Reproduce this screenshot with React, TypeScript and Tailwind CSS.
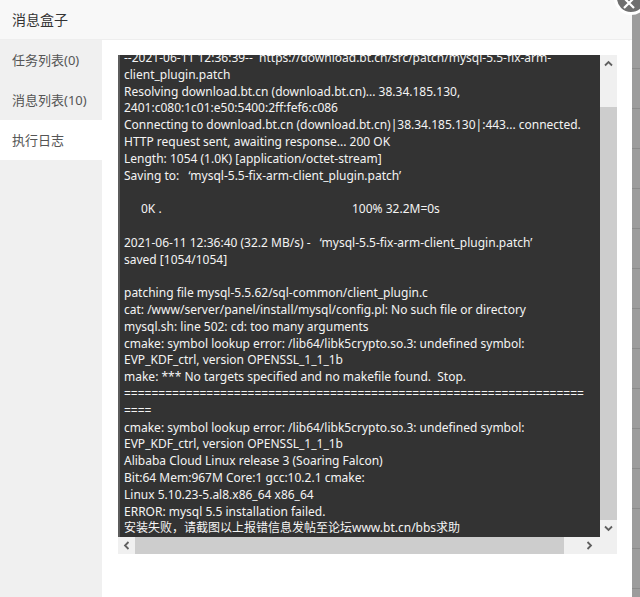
import React from "react";

const lines: React.ReactNode[] = [
  "--2021-06-11 12:36:39--  https://download.bt.cn/src/patch/mysql-5.5-fix-arm-",
  "client_plugin.patch",
  "Resolving download.bt.cn (download.bt.cn)... 38.34.185.130,",
  "2401:c080:1c01:e50:5400:2ff:fef6:c086",
  "Connecting to download.bt.cn (download.bt.cn)|38.34.185.130|:443... connected.",
  "HTTP request sent, awaiting response... 200 OK",
  "Length: 1054 (1.0K) [application/octet-stream]",
  "Saving to:   \u2018mysql-5.5-fix-arm-client_plugin.patch\u2019",
  "",
  <span>
    <span className="inline-block w-[228px] pl-[17px]">0K .</span>
    <span>100% 32.2M=0s</span>
  </span>,
  "",
  "2021-06-11 12:36:40 (32.2 MB/s) -   \u2018mysql-5.5-fix-arm-client_plugin.patch\u2019",
  "saved [1054/1054]",
  "",
  "patching file mysql-5.5.62/sql-common/client_plugin.c",
  "cat: /www/server/panel/install/mysql/config.pl: No such file or directory",
  "mysql.sh: line 502: cd: too many arguments",
  "cmake: symbol lookup error: /lib64/libk5crypto.so.3: undefined symbol:",
  "EVP_KDF_ctrl, version OPENSSL_1_1_1b",
  "make: *** No targets specified and no makefile found.  Stop.",
  "===================================================================",
  "====",
  "cmake: symbol lookup error: /lib64/libk5crypto.so.3: undefined symbol:",
  "EVP_KDF_ctrl, version OPENSSL_1_1_1b",
  "Alibaba Cloud Linux release 3 (Soaring Falcon)",
  "Bit:64 Mem:967M Core:1 gcc:10.2.1 cmake:",
  "Linux 5.10.23-5.al8.x86_64 x86_64",
  "ERROR: mysql 5.5 installation failed.",
  "安装失败，请截图以上报错信息发帖至论坛www.bt.cn/bbs求助",
];

function Chevron({ dir }: { dir: "up" | "down" | "left" | "right" }) {
  const rot = { up: 0, right: 90, down: 180, left: 270 }[dir];
  return (
    <svg width="9" height="9" viewBox="0 0 9 9" style={{ transform: `rotate(${rot}deg)` }}>
      <path d="M1 6.5 L4.5 3 L8 6.5" fill="none" stroke="#606060" strokeWidth="1.8" />
    </svg>
  );
}

export default function App() {
  return (
    <div
      className="relative flex w-[640px] h-[597px] overflow-hidden bg-[#9c9c9c]"
      style={{ fontFamily: '"Noto Sans", "Noto Sans CJK SC", sans-serif' }}
    >
      <div className="flex w-[632px] h-full flex-col bg-white">
        <div className="h-[40px] shrink-0 border-b border-[#eeeeee] bg-[#f8f8f8] pl-[12px] text-[14px] leading-[39px] text-[#333]">
          消息盒子
        </div>
        <div className="flex flex-1 min-h-0">
          <div className="w-[102px] shrink-0 bg-[#f0f0f0] text-[13px] text-[#555]">
            <div className="h-[40px] pl-[12px] leading-[40px]">任务列表(0)</div>
            <div className="h-[40px] pl-[12px] leading-[40px]">消息列表(10)</div>
            <div className="h-[40px] bg-white pl-[12px] leading-[40px]">执行日志</div>
          </div>
          <div className="flex-1 pl-[16px] pt-[15px]">
            <div className="grid w-[499px] h-[499px] grid-cols-[482px_17px] grid-rows-[482px_17px]">
              <div className="overflow-hidden border-l-[2px] border-[#5c5c5c] bg-[#333333] pl-[4px] text-[12px] leading-[16.8px] text-[#f4f4f4]">
                <div className="-mt-[5px] whitespace-pre">
                  {lines.map((l, i) => (
                    <div key={i} className="h-[16.8px]">
                      {l}
                    </div>
                  ))}
                </div>
              </div>
              <div className="flex flex-col bg-[#f0f0f0]">
                <div className="flex h-[17px] items-center justify-center">
                  <Chevron dir="up" />
                </div>
                <div className="h-[35px]" />
                <div className="flex-1 bg-[#cdcdcd]" />
                <div className="flex h-[17px] items-center justify-center">
                  <Chevron dir="down" />
                </div>
              </div>
              <div className="flex bg-[#f0f0f0]">
                <div className="flex w-[17px] items-center justify-center">
                  <Chevron dir="left" />
                </div>
                <div className="w-[429px] bg-[#cdcdcd]" />
                <div className="flex flex-1 items-center justify-end pr-[6px]">
                  <Chevron dir="right" />
                </div>
              </div>
              <div className="bg-[#f0f0f0]" />
            </div>
          </div>
        </div>
      </div>
      <div className="flex flex-1 flex-col pt-[68px]">
        {Array.from({ length: 14 }).map((_, i) => (
          <div key={i} className="h-[40px] shrink-0 border-t border-[#8a8a8a]" />
        ))}
      </div>
      <div className="absolute left-[614px] top-[-19px] flex h-[34px] w-[34px] items-center justify-center rounded-full border-[3px] border-white bg-[#6f6f6f]">
        <svg width="14" height="14" viewBox="0 0 14 14" className="mt-[10px] -ml-[4px]">
          <path d="M2 2 L12 12 M12 2 L2 12" stroke="white" strokeWidth="2.2" />
        </svg>
      </div>
    </div>
  );
}
